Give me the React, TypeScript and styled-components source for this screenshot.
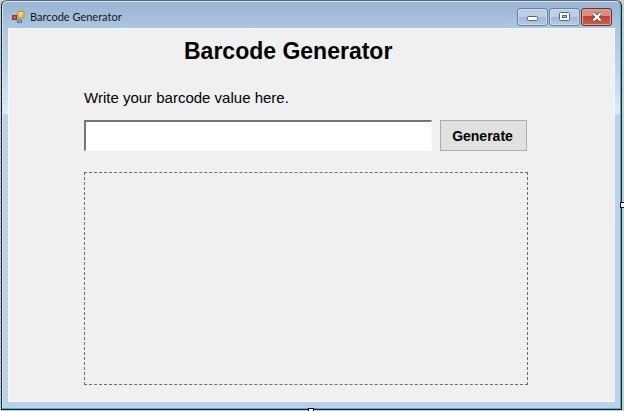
import React, { useState } from "react";
import styled, { createGlobalStyle, css } from "styled-components";

const GlobalStyle = createGlobalStyle`
  * { box-sizing: border-box; }
  html, body, #root { height: 100%; }
  body {
    margin: 0;
    background: #e4eaea;
    font-family: "Liberation Sans", Arial, sans-serif;
    color: #000;
  }
`;

const Surface = styled.div`
  position: relative;
  height: 100%;
  min-height: 320px;
  padding: 0 2px 1px 1px;
  overflow: hidden;
  background: repeating-conic-gradient(#b4b4b4 0 25%, #e2e2e2 0 50%) right top / 2px 2px;
`;

const WindowFrame = styled.section`
  height: 100%;
  display: flex;
  flex-direction: column;
  padding: 0 6px 7px 6px;
  border: 1px solid #10232f;
  border-top-color: #59697a;
  border-radius: 6px 6px 0 0;
  box-shadow: inset -1px -1px 0 #45b5c8, inset 1px 1px 0 #d3e3f2;
  background: linear-gradient(#98b4d2 0, #adc7e2 28px, #bdd5ed 70px, #dbebfb 113px, #b9d1ea 114px);
`;

const TitleBar = styled.header`
  display: flex;
  align-items: center;
  height: 27px;
  flex: none;
  padding: 5px 3px 0 4px;
  gap: 5px;
`;

const WindowTitle = styled.span`
  flex: 1;
  font: 11px/16px Lato, "Open Sans", sans-serif;
  color: #101820;
`;

const CaptionButtons = styled.div`
  display: flex;
  gap: 1px;
`;

const CaptionButton = styled.button<{ $danger?: boolean }>`
  display: flex;
  align-items: center;
  justify-content: center;
  width: 31px;
  height: 18px;
  padding: 0;
  border: 1px solid #6481a0;
  border-radius: 3px;
  box-shadow: inset 0 0 0 1px #c9dced;
  background: linear-gradient(#bdd0e3 0 50%, #9fb9d4 50%, #b4cce4);
  ${(p) =>
    p.$danger &&
    css`
      border-color: #6a2d30;
      box-shadow: inset 0 0 0 1px #dfa59a;
      background: linear-gradient(#d98f80 0 45%, #bd4330 45%, #c9604b);
    `}
`;

const Client = styled.main`
  flex: 1;
  display: flex;
  flex-direction: column;
  padding: 8px 86px 16px 75px;
  border: 1px solid #f6f9fc;
  background: #f0f0f0;
`;

const Heading = styled.h1`
  margin: 0 0 0 100px;
  font-size: 23px;
  line-height: 28px;
  font-weight: 700;
  white-space: nowrap;
`;

const Prompt = styled.label`
  margin: 23px 0 12px;
  font-size: 15px;
  line-height: 20px;
`;

const EntryRow = styled.div`
  display: flex;
  gap: 8px;
  padding-right: 1px;
  margin-bottom: 21px;
`;

const ValueInput = styled.input`
  flex: 1;
  min-width: 0;
  height: 31px;
  padding: 0 4px;
  font: 16px "Liberation Sans", Arial, sans-serif;
  border: 2px solid;
  border-color: #747474 #fafafa #fafafa #747474;
  border-right-width: 1px;
  border-bottom-width: 1px;
  background: #fff;
  outline: none;
`;

const GenerateButton = styled.button`
  width: 87px;
  height: 31px;
  padding: 0 2px 0 0;
  border: 1px solid #adadad;
  background: #e1e1e1;
  font: bold 14px "Liberation Sans", Arial, sans-serif;
  color: #000;
`;

const Preview = styled.div`
  flex: 1;
  border: 1px dashed #6c6c6c;
`;

const Handle = styled.span<{ $edge: "right" | "bottom" }>`
  position: absolute;
  width: 6px;
  height: 6px;
  background: #fff;
  border: 1px solid #111;
  ${(p) =>
    p.$edge === "right"
      ? css`
          right: -2px;
          top: calc(50% - 4px);
        `
      : css`
          bottom: -3px;
          left: calc(50% - 4px);
        `}
`;

const AppIcon = () => (
  <svg width="13" height="13" viewBox="0 0 13 13" aria-hidden="true">
    <defs>
      <linearGradient id="gold" x1="0" y1="0" x2="1" y2="1">
        <stop offset="0" stopColor="#fff0a0" />
        <stop offset="1" stopColor="#f2a820" />
      </linearGradient>
    </defs>
    <rect x="0.5" y="4.5" width="4" height="4" fill="#c44a2c" stroke="#8c3a2a" />
    <rect x="2" y="6" width="1" height="1" fill="#f0a080" />
    <rect x="6" y="0.5" width="6" height="6.5" fill="url(#gold)" stroke="#c08a30" />
    <rect x="5.5" y="9" width="4" height="2.5" fill="#72a8ee" stroke="#4a78c0" />
  </svg>
);

const MinimizeIcon = () => (
  <svg width="13" height="10" viewBox="0 0 13 10" aria-hidden="true">
    <rect x="1.5" y="4.5" width="10" height="4" rx="1" fill="#fff" stroke="#5b6675" />
  </svg>
);

const MaximizeIcon = () => (
  <svg width="11" height="10" viewBox="0 0 11 10" aria-hidden="true">
    <rect x="0.5" y="0.5" width="10" height="8" rx="1" fill="#fff" stroke="#5b6675" />
    <rect x="3.5" y="3.5" width="4" height="2" fill="#a9c0d8" stroke="#5b6675" />
  </svg>
);

const CloseIcon = () => (
  <svg width="12" height="10" viewBox="0 0 12 10" aria-hidden="true">
    <path d="M2.5 1.5L9.5 8.5M9.5 1.5L2.5 8.5" stroke="#6b4448" strokeWidth="4" />
    <path d="M2.5 1.5L9.5 8.5M9.5 1.5L2.5 8.5" stroke="#fff" strokeWidth="2.4" />
  </svg>
);

export default function App() {
  const [value, setValue] = useState("");

  return (
    <>
      <GlobalStyle />
      <Surface>
        <WindowFrame>
          <TitleBar>
            <AppIcon />
            <WindowTitle>Barcode Generator</WindowTitle>
            <CaptionButtons>
              <CaptionButton type="button" aria-label="Minimize">
                <MinimizeIcon />
              </CaptionButton>
              <CaptionButton type="button" aria-label="Maximize">
                <MaximizeIcon />
              </CaptionButton>
              <CaptionButton type="button" aria-label="Close" $danger>
                <CloseIcon />
              </CaptionButton>
            </CaptionButtons>
          </TitleBar>
          <Client>
            <Heading>Barcode Generator</Heading>
            <Prompt htmlFor="barcode-value">Write your barcode value here.</Prompt>
            <EntryRow>
              <ValueInput
                id="barcode-value"
                type="text"
                value={value}
                onChange={(e) => setValue(e.target.value)}
              />
              <GenerateButton type="button">Generate</GenerateButton>
            </EntryRow>
            <Preview />
          </Client>
        </WindowFrame>
        <Handle $edge="right" />
        <Handle $edge="bottom" />
      </Surface>
    </>
  );
}
